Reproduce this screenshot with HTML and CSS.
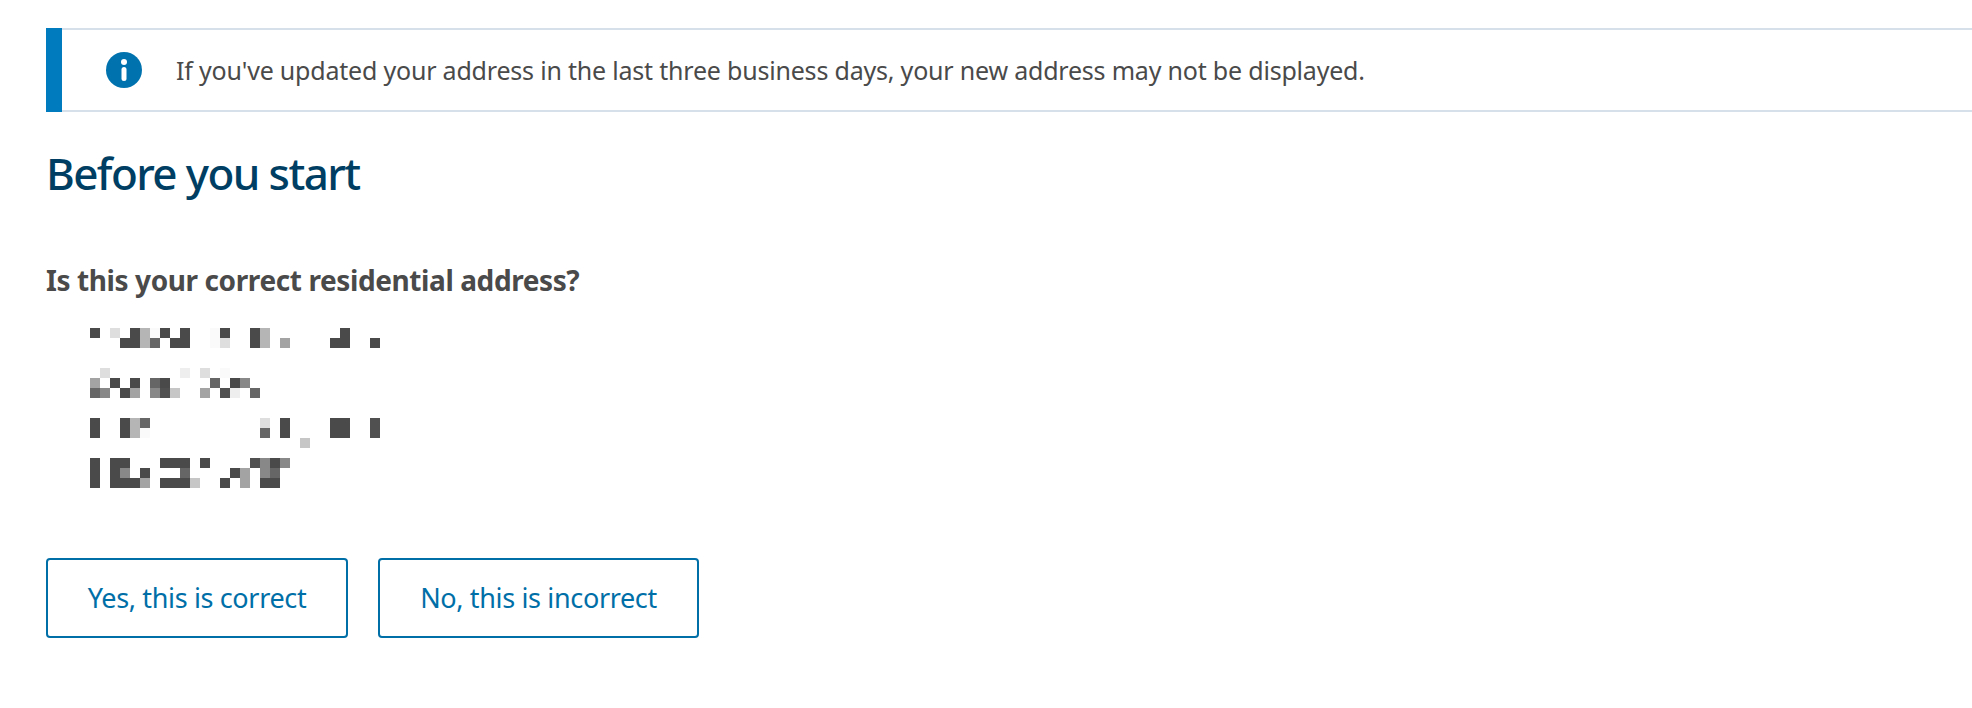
FILE: index.html

```html
<!DOCTYPE html>
<html lang="en">
<head>
    <meta charset="UTF-8">
    <meta name="viewport" content="width=device-width, initial-scale=1.0">
    <title>Before you start</title>
    <link rel="stylesheet" href="styles.css">
</head>
<body>
    <div class="alert">
        <div class="alert-body">
            <svg class="alert-icon" width="36" height="36" viewBox="0 0 36 36" aria-hidden="true">
                <circle cx="18" cy="18" r="18" fill="#0073ae"/>
                <circle cx="18" cy="10" r="3" fill="#fff"/>
                <rect x="15.5" y="15" width="5" height="14" rx="2.5" fill="#fff"/>
            </svg>
            <p class="alert-text">If you've updated your address in the last three business days, your new address may not be displayed.</p>
        </div>
    </div>

    <div class="content">
        <h1>Before you start</h1>
        <h2>Is this your correct residential address?</h2>

        <!-- address is pixelated in the original -->
        <svg class="address" width="290" height="160" viewBox="0 0 290 160" role="img" aria-label="Address hidden">
            <g fill="#4a4a4a">
                <rect x="0" y="0" width="10" height="10"/><rect x="40" y="0" width="10" height="10"/><rect x="70" y="0" width="10" height="10"/><rect x="90" y="0" width="10" height="10"/><rect x="130" y="0" width="10" height="10"/><rect x="160" y="0" width="10" height="20"/><rect x="250" y="0" width="10" height="10"/>
                <rect x="30" y="10" width="20" height="10"/><rect x="80" y="10" width="20" height="10"/><rect x="240" y="10" width="20" height="10"/><rect x="280" y="10" width="10" height="10"/>
                <rect x="20" y="50" width="10" height="10"/><rect x="40" y="50" width="10" height="10"/><rect x="70" y="50" width="10" height="10"/><rect x="140" y="50" width="10" height="10"/>
                <rect x="30" y="60" width="10" height="10"/>
                <rect x="0" y="90" width="10" height="20"/><rect x="30" y="90" width="10" height="20"/><rect x="190" y="90" width="10" height="20"/><rect x="240" y="90" width="20" height="20"/>
                <rect x="0" y="130" width="10" height="30"/><rect x="20" y="130" width="10" height="30"/><rect x="30" y="130" width="10" height="10"/><rect x="70" y="130" width="30" height="10"/><rect x="110" y="130" width="10" height="10"/><rect x="180" y="130" width="10" height="10"/>
                <rect x="50" y="140" width="10" height="10"/><rect x="140" y="140" width="10" height="10"/>
                <rect x="30" y="150" width="20" height="10"/><rect x="70" y="150" width="30" height="10"/><rect x="130" y="150" width="10" height="10"/><rect x="170" y="150" width="20" height="10"/>
            </g>
            <g fill="#b5b5b5">
                <rect x="50" y="0" width="10" height="20"/><rect x="170" y="0" width="10" height="20"/><rect x="40" y="90" width="10" height="20"/>
            </g>
            <g fill="#666">
                <rect x="60" y="10" width="10" height="10"/><rect x="0" y="60" width="10" height="10"/><rect x="120" y="50" width="10" height="10"/><rect x="160" y="60" width="10" height="10"/><rect x="50" y="90" width="10" height="10"/><rect x="170" y="100" width="10" height="10"/><rect x="90" y="140" width="10" height="10"/><rect x="180" y="140" width="10" height="10"/><rect x="60" y="50" width="10" height="10"/>
            </g>
            <g fill="#505050">
                <rect x="70" y="60" width="10" height="10"/><rect x="130" y="60" width="10" height="10"/><rect x="160" y="130" width="10" height="10"/><rect x="280" y="90" width="10" height="20"/>
            </g>
            <g fill="#888">
                <rect x="10" y="60" width="10" height="10"/><rect x="150" y="50" width="10" height="10"/><rect x="60" y="60" width="10" height="10"/><rect x="30" y="140" width="10" height="10"/><rect x="170" y="130" width="10" height="10"/><rect x="190" y="130" width="10" height="10"/><rect x="170" y="140" width="10" height="10"/>
            </g>
            <g fill="#a3a3a3">
                <rect x="190" y="10" width="10" height="10"/><rect x="0" y="50" width="10" height="10"/><rect x="40" y="60" width="10" height="10"/><rect x="110" y="60" width="10" height="10"/><rect x="150" y="140" width="10" height="10"/><rect x="50" y="150" width="10" height="10"/><rect x="150" y="150" width="10" height="10"/>
            </g>
            <g fill="#c6c6c6">
                <rect x="80" y="60" width="10" height="10"/><rect x="210" y="110" width="10" height="10"/><rect x="100" y="150" width="10" height="10"/>
            </g>
            <g fill="#dedede">
                <rect x="20" y="0" width="10" height="10"/><rect x="130" y="10" width="10" height="10"/><rect x="10" y="40" width="10" height="10"/><rect x="110" y="40" width="10" height="10"/><rect x="170" y="90" width="10" height="10"/>
            </g>
            <g fill="#eee">
                <rect x="90" y="40" width="10" height="10"/><rect x="140" y="60" width="10" height="10"/>
            </g>
            <g fill="#fafafa">
                <rect x="60" y="0" width="10" height="10"/><rect x="120" y="0" width="10" height="20"/><rect x="130" y="40" width="10" height="10"/><rect x="50" y="100" width="10" height="10"/>
            </g>
        </svg>

        <div class="actions">
            <a class="btn btn-yes" href="#">Yes, this is correct</a>
            <a class="btn btn-no" href="#">No, this is incorrect</a>
        </div>
    </div>
</body>
</html>
```

FILE: styles.css

```css
body {
    margin: 0;
    padding-top: 28px;
    font-family: "Noto Sans", "Open Sans", sans-serif;
    color: #4a4a4a;
    background-color: #fff;
}
.alert {
    margin-left: 46px;
    border-left: 16px solid #007bbd;
}
.alert-body {
    display: flex;
    align-items: center;
    height: 84px;
    box-sizing: border-box;
    padding-left: 44px;
    border-top: 2px solid #d5e0ea;
    border-bottom: 2px solid #d5e0ea;
}
.alert-icon {
    flex: none;
    margin-right: 34px;
}
.alert-text {
    margin: 0;
    font-size: 25px;
    letter-spacing: -0.2px;
}
.content {
    padding-left: 46px;
}
h1 {
    margin: 31px 0 0;
    font-size: 44px;
    line-height: 60px;
    font-weight: 500;
    letter-spacing: -1.6px;
    color: #003f63;
}
h2 {
    margin: 59px 0 0;
    font-size: 28px;
    line-height: 36px;
    font-weight: 700;
    letter-spacing: -0.4px;
}
.address {
    display: block;
    margin: 30px 0 0 44px;
}
.actions {
    display: flex;
    gap: 30px;
    margin-top: 70px;
}
.btn {
    display: flex;
    align-items: center;
    justify-content: center;
    height: 80px;
    box-sizing: border-box;
    padding-bottom: 2px;
    border: 2px solid #006fa8;
    border-radius: 4px;
    font-size: 27px;
    letter-spacing: -0.35px;
    color: #006fa8;
    text-decoration: none;
}
.btn-yes {
    width: 302px;
}
.btn-no {
    width: 321px;
}
```
